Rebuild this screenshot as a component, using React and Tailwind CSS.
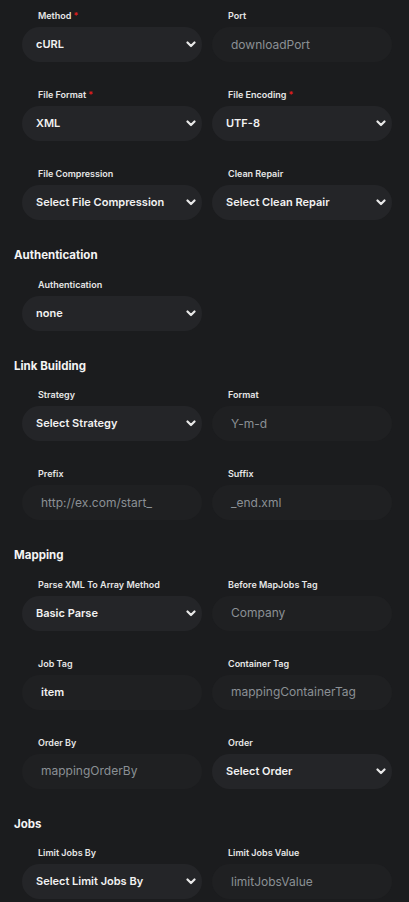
const sections = [
  {
    title: null,
    fields: [
      { label: "Method", required: true, type: "select", value: "cURL" },
      { label: "Port", type: "input", placeholder: "downloadPort" },
      { label: "File Format", required: true, type: "select", value: "XML" },
      { label: "File Encoding", required: true, type: "select", value: "UTF-8" },
      { label: "File Compression", type: "select", value: "Select File Compression" },
      { label: "Clean Repair", type: "select", value: "Select Clean Repair" },
    ],
  },
  {
    title: "Authentication",
    fields: [{ label: "Authentication", type: "select", value: "none" }],
  },
  {
    title: "Link Building",
    fields: [
      { label: "Strategy", type: "select", value: "Select Strategy" },
      { label: "Format", type: "input", placeholder: "Y-m-d" },
      { label: "Prefix", type: "input", placeholder: "http://ex.com/start_" },
      { label: "Suffix", type: "input", placeholder: "_end.xml" },
    ],
  },
  {
    title: "Mapping",
    fields: [
      { label: "Parse XML To Array Method", type: "select", value: "Basic Parse" },
      { label: "Before MapJobs Tag", type: "input", placeholder: "Company" },
      { label: "Job Tag", type: "input", value: "item" },
      { label: "Container Tag", type: "input", placeholder: "mappingContainerTag" },
      { label: "Order By", type: "input", placeholder: "mappingOrderBy" },
      { label: "Order", type: "select", value: "Select Order" },
    ],
  },
  {
    title: "Jobs",
    fields: [
      { label: "Limit Jobs By", type: "select", value: "Select Limit Jobs By" },
      { label: "Limit Jobs Value", type: "input", placeholder: "limitJobsValue" },
    ],
  },
];

function Chevron() {
  return (
    <svg width="10" height="7" viewBox="0 0 10 7" className="shrink-0">
      <path d="M1.5 1.5 L5 5 L8.5 1.5" fill="none" stroke="#e8e8e8" strokeWidth="2.2" strokeLinecap="round" strokeLinejoin="round" />
    </svg>
  );
}

function Field({ field }) {
  return (
    <div className="flex flex-col">
      <label className="mb-[4px] pl-[16px] text-[9px] leading-[14px] font-semibold text-[#e6e6e6]">
        {field.label}
        {field.required && <span className="ml-[2px] text-[#e11d1d]">*</span>}
      </label>
      {field.type === "select" ? (
        <div className="flex h-[35px] items-center justify-between rounded-full bg-[#242528] pl-[14px] pr-[6px]">
          <span className="text-[11px] font-semibold text-[#f2f2f2]">{field.value}</span>
          <Chevron />
        </div>
      ) : (
        <div className="flex h-[35px] items-center rounded-full bg-[#1f2022] pl-[19px] pr-[12px]">
          {field.value ? (
            <span className="text-[11px] font-semibold text-[#f2f2f2]">{field.value}</span>
          ) : (
            <span className="text-[12px] text-[#8b9095]">{field.placeholder}</span>
          )}
        </div>
      )}
    </div>
  );
}

export default function App() {
  return (
    <div className="min-h-[902px] bg-[#1b1c1e] pt-[9px] pl-[14px] pr-[17px] pb-[6px]" style={{ fontFamily: "Inter, 'Open Sans', sans-serif" }}>
      <div className="flex flex-col gap-[25px]">
        {sections.map((section, i) => (
          <div key={i} className="flex flex-col">
            {section.title && (
              <h2 className="mb-[12.5px] text-[11.5px] leading-[20px] font-bold text-[#f4f4f4]">{section.title}</h2>
            )}
            <div className="grid grid-cols-2 gap-x-[10px] gap-y-[26px] pl-[8px]">
              {section.fields.map((f) => (
                <Field key={f.label} field={f} />
              ))}
            </div>
          </div>
        ))}
      </div>
    </div>
  );
}
